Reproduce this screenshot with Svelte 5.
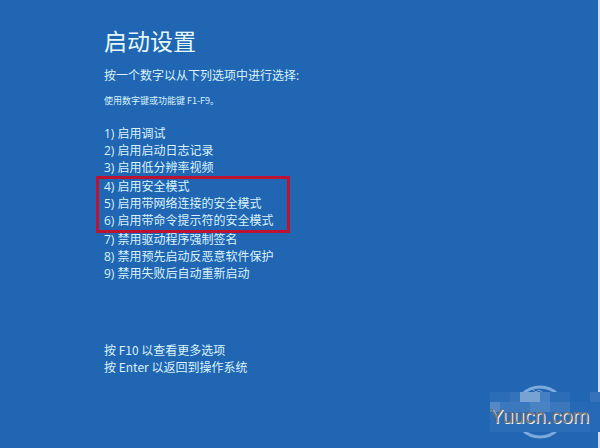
<script lang="ts">
  const groups = [
    {
      marked: false,
      items: ['1) 启用调试', '2) 启用启动日志记录', '3) 启用低分辨率视频'],
    },
    {
      marked: true,
      items: ['4) 启用安全模式', '5) 启用带网络连接的安全模式', '6) 启用带命令提示符的安全模式'],
    },
    {
      marked: false,
      items: ['7) 禁用驱动程序强制签名', '8) 禁用预先启动反恶意软件保护', '9) 禁用失败后自动重新启动'],
    },
  ];
</script>

<main class="screen">
  <div class="content">
    <h1>启动设置</h1>
    <p class="lead">按一个数字以从下列选项中进行选择:</p>
    <p class="hint">使用数字键或功能键 F1-F9。</p>

    <div class="options">
      {#each groups as group}
        <ul class:marked={group.marked}>
          {#each group.items as item}
            <li>{item}</li>
          {/each}
        </ul>
      {/each}
    </div>

    <footer>
      <p>按 F10 以查看更多选项</p>
      <p>按 Enter 以返回到操作系统</p>
    </footer>
  </div>

  <div class="watermark">
    <svg viewBox="0 0 110 56" aria-hidden="true">
      <circle cx="50" cy="28" r="25" fill="none" stroke="#7ea9d8" stroke-width="3" />
      <path d="M42 5l4 3 3-2 3 2" fill="none" stroke="#7ea9d8" stroke-width="1" />
      <rect x="0" y="8" width="80" height="40" fill="#2c6db8" />
      <rect x="20" y="8" width="10" height="10" fill="#3472bb" />
      <rect x="30" y="8" width="20" height="10" fill="#77a3d3" />
      <rect x="50" y="8" width="10" height="10" fill="#4480c2" />
      <rect x="0" y="18" width="10" height="10" fill="#5488c6" />
      <rect x="10" y="18" width="30" height="10" fill="#3b78bd" />
      <rect x="40" y="18" width="20" height="10" fill="#4a83c2" />
      <rect x="60" y="18" width="20" height="10" fill="#3a77bd" />
      <rect x="80" y="18" width="30" height="30" fill="#2669b5" />
      <rect x="80" y="28" width="20" height="20" fill="#2b6db8" />
      <rect x="100" y="8" width="10" height="10" fill="#3572bb" />
    </svg>
    <span>Yuucn.com</span>
  </div>
</main>

<style>
  :global(body) {
    margin: 0;
    background: #2066b3;
  }

  .screen {
    position: relative;
    box-sizing: border-box;
    min-height: 100vh;
    padding: 25px 24px 24px 104px;
    border-right: 2px solid #d4dcf4;
    background: #2066b3;
    color: #d9f3fc;
    font-family: "Open Sans", "Noto Sans CJK SC", sans-serif;
    font-size: 12px;
    line-height: 17px;
  }

  h1,
  p,
  ul {
    margin: 0;
    padding: 0;
    font-weight: 400;
  }

  h1 {
    color: #e4fafd;
    font-size: 23px;
    line-height: 32px;
  }

  .lead {
    margin-top: 10px;
  }

  .hint {
    margin-top: 8px;
    font-family: "Noto Sans CJK SC", sans-serif;
    font-size: 9px;
  }

  .options {
    display: flex;
    flex-direction: column;
    align-items: flex-start;
    gap: 2px;
    margin-top: 16px;
  }

  ul {
    position: relative;
    list-style: none;
  }

  /* red frame around the safe mode choices */
  .marked::after {
    content: '';
    position: absolute;
    inset: -2px -16px -4px -8px;
    border: 3px solid #be1233;
  }

  footer {
    margin-top: 59px;
    font-family: "Noto Sans CJK SC", sans-serif;
  }

  .watermark {
    position: absolute;
    right: -2px;
    bottom: 8px;
    width: 110px;
    height: 56px;
  }

  .watermark svg {
    display: block;
    width: 100%;
  }

  .watermark span {
    position: absolute;
    left: 0;
    top: 20px;
    color: #77716f;
    font-family: "Liberation Sans", Arial, sans-serif;
    font-size: 20px;
    line-height: 24px;
    text-shadow: 1px 1px 0 #f4f2f0;
  }
</style>
